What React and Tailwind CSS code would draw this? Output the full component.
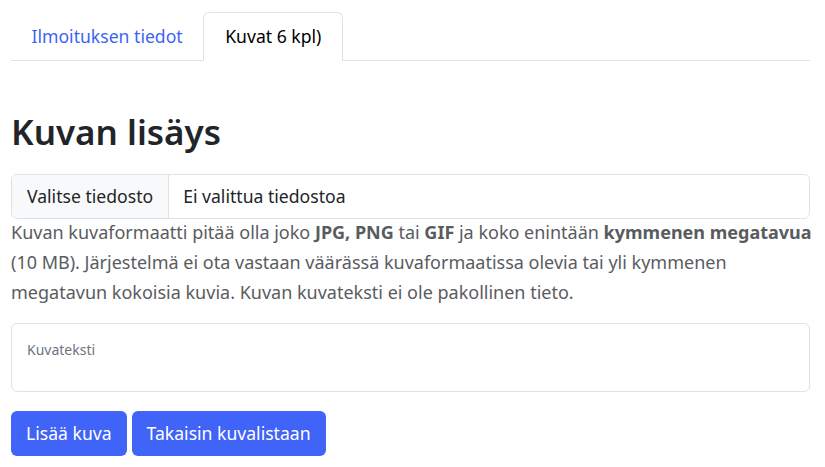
import React from "react";

const App = () => {
  return (
    <div
      className="min-h-screen bg-white pl-[11px] pr-[15px] pt-[12px] text-[#212529]"
      style={{ fontFamily: '"Noto Sans", "Open Sans", sans-serif' }}
    >
      {/* Tabs */}
      <div className="flex border-b border-[#dee2e6]">
        <button className="h-[48px] px-[20.5px] text-[17.6px] text-[#3d63f5] mb-[-1px]">
          Ilmoituksen tiedot
        </button>
        <button className="h-[49px] px-[21px] text-[17.6px] text-black bg-white border border-[#dee2e6] border-b-white rounded-t-[6px] mb-[-1px]">
          Kuvat 6 kpl)
        </button>
      </div>

      {/* Heading */}
      <h1 className="mt-[50px] text-[35px] font-semibold leading-[1.2] text-[#212529]">
        Kuvan lisäys
      </h1>

      {/* File input */}
      <div className="mt-[21px] flex h-[45px] rounded-[6px] border border-[#dee2e6] overflow-hidden text-[17.6px]">
        <div className="flex items-center px-[15px] bg-[#f8f9fa] border-r border-[#dee2e6]">
          Valitse tiedosto
        </div>
        <div className="flex items-center px-[14px]">Ei valittua tiedostoa</div>
      </div>

      {/* Help text */}
      <p className="mt-[-2px] text-[18px] leading-[30px] text-[#595c5f] whitespace-nowrap">
        Kuvan kuvaformaatti pitää olla joko <b>JPG, PNG</b> tai <b>GIF</b> ja koko
        enintään <b>kymmenen megatavua</b>
        <br />
        (10 MB). Järjestelmä ei ota vastaan väärässä kuvaformaatissa olevia tai yli kymmenen
        <br />
        megatavun kokoisia kuvia. Kuvan kuvateksti ei ole pakollinen tieto.
      </p>

      {/* Caption textarea */}
      <div className="mt-[16px] h-[69px] rounded-[6px] border border-[#dee2e6] px-[15px] pt-[13px]">
        <span className="text-[14px] text-[#6c757d]">Kuvateksti</span>
      </div>

      {/* Buttons */}
      <div className="mt-[19px] flex gap-[5px]">
        <button className="h-[45px] px-[15px] rounded-[6px] bg-[#4063f8] text-white text-[17.6px]">
          Lisää kuva
        </button>
        <button className="h-[45px] px-[15px] rounded-[6px] bg-[#4063f8] text-white text-[17.6px]">
          Takaisin kuvalistaan
        </button>
      </div>
    </div>
  );
};

export default App;
